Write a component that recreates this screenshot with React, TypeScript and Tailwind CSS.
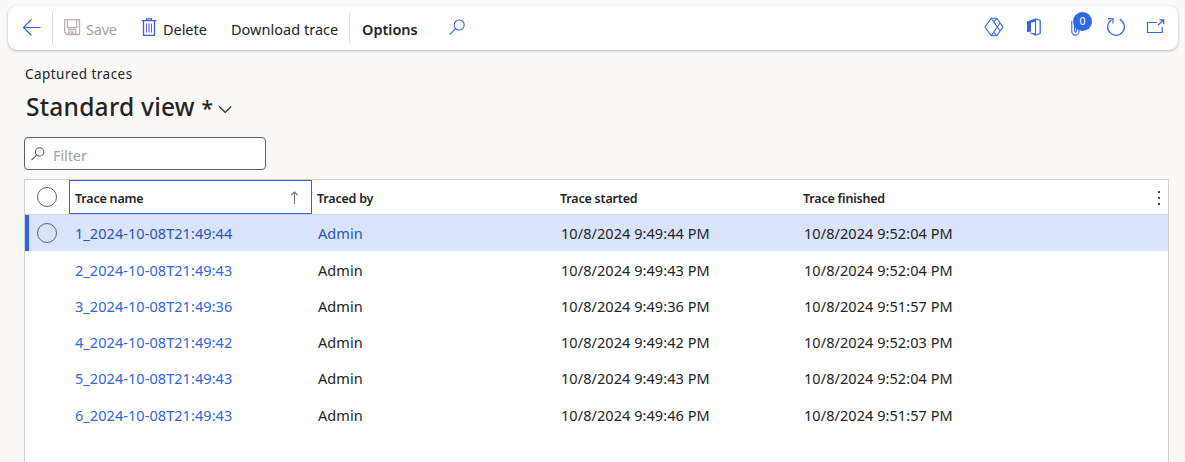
import React from "react";

const rows = [
  { name: "1_2024-10-08T21:49:44", start: "10/8/2024 9:49:44 PM", end: "10/8/2024 9:52:04 PM", h: "h-[36px]" },
  { name: "2_2024-10-08T21:49:43", start: "10/8/2024 9:49:43 PM", end: "10/8/2024 9:52:04 PM", h: "h-[37px]" },
  { name: "3_2024-10-08T21:49:36", start: "10/8/2024 9:49:36 PM", end: "10/8/2024 9:51:57 PM", h: "h-[36px]" },
  { name: "4_2024-10-08T21:49:42", start: "10/8/2024 9:49:42 PM", end: "10/8/2024 9:52:03 PM", h: "h-[36px]" },
  { name: "5_2024-10-08T21:49:43", start: "10/8/2024 9:49:43 PM", end: "10/8/2024 9:52:04 PM", h: "h-[36px]" },
  { name: "6_2024-10-08T21:49:43", start: "10/8/2024 9:49:46 PM", end: "10/8/2024 9:51:57 PM", h: "h-[37px]" },
];

function Icon({ w, h, className, children }: { w: number; h: number; className?: string; children: React.ReactNode }) {
  return (
    <svg width={w} height={h} viewBox={`0 0 ${w} ${h}`} fill="none" stroke="currentColor" strokeWidth="1.1" className={`shrink-0 ${className ?? ""}`}>
      {children}
    </svg>
  );
}

function Toolbar() {
  return (
    <header className="ml-2 mr-[7px] mt-1.5 flex h-11 shrink-0 rounded-[9px] bg-white text-[14.5px] leading-5 text-[#242424] shadow-[0_1px_3px_rgba(0,0,0,0.28)]">
      <button className="flex h-11 w-11 shrink-0 pl-[14px] pt-3 text-[#3566e3]" aria-label="Back">
        <Icon w={20} h={18}>
          <path d="M18.5 9.5H1.5M9.5 1.5l-8 8 8 8" strokeWidth="1.2" />
        </Icon>
      </button>
      <div className="mt-1.5 h-8 w-px shrink-0 bg-[#dcdcdc]" />
      <button className="flex w-[79px] shrink-0 pl-[11px] text-[#a3a19f]">
        <Icon w={17} h={17} className="mt-[13px] text-[#b9b1ae]">
          <path d="M.7.7h14.8v14.8H3L.7 13.2zM3.5.7v7.8h9.2V.7M4.7 15.5v-5h7v5M6.9 15.5v-2.7h2v2.7" strokeWidth="1.3" />
        </Icon>
        <span className="ml-[5px] mt-[13px] tracking-[-0.2px]">Save</span>
      </button>
      <button className="flex w-[91px] shrink-0 pl-[9px]">
        <Icon w={16} h={19} className="mt-[12px] text-[#3a62e3]">
          <path d="M.5 2.6h14.8M5.5 2.5V.8h4.8v1.7M2.5 2.8v14.5h11V2.8" strokeWidth="1.3" />
          <path d="M5.5 5.5v9M8 5.5v9M10.5 5.5v9" stroke="#6f5fe0" strokeWidth="1.1" />
        </Icon>
        <span className="ml-[6px] mt-[13px] tracking-[-0.05px]">Delete</span>
      </button>
      <button className="flex w-[126px] shrink-0 whitespace-nowrap pl-2 pt-[13px] tracking-[0.02px]">Download trace</button>
      <div className="mt-1.5 h-8 w-px shrink-0 bg-[#dcdcdc]" />
      <button className="flex w-[99px] shrink-0 pl-3 pt-[13px] font-semibold tracking-[-0.02px]">Options</button>
      <Icon w={17} h={17} className="mt-[13px] text-[#3566e3]">
        <circle cx="10.2" cy="6" r="5" />
        <path d="M6.7 9.6.5 15.7" />
      </Icon>
      <div className="ml-auto flex text-[#3566e3]">
        <Icon w={20} h={20} className="mr-[22px] mt-[11px]">
          <path d="M7.3 1.3h5.4L19 10l-6.3 8.7H7.3L1 10z" strokeWidth="1.1" />
          <path d="M7.3 1.3 13.2 10l-5.9 8.7M12.7 1.3 9.6 5M12.7 18.7 9.6 15M13.2 10l3-4M13.2 10l3 4" strokeWidth="1.1" />
        </Icon>
        <Icon w={16} h={18} className="mr-[26px] mt-[12px]">
          <path d="M9.5 1 14.2 2.5v13L9.5 17" strokeWidth="1.3" />
          <path d="M9.8.3v3.2L5 4.8v8.7L1 14.3V3.6zM2.7 14.5l7.1.8v2.4z" fill="currentColor" stroke="none" />
          <path d="M9.5.7v16.6" />
        </Icon>
        <div className="relative mr-[9px] w-[29px] shrink-0">
          <Icon w={12} h={20} className="ml-[3px] mt-[11px]">
            <path d="M.8 4v10.5a3.6 3.6 0 0 0 7.2 0V4a2.2 2.2 0 0 0-4.4 0v10.3a.9.9 0 0 0 1.8 0V6" />
          </Icon>
          <span className="absolute left-[5px] top-[6px] flex h-[19px] w-[19px] items-center justify-center rounded-full bg-[#2f66e4] text-[10.5px] leading-none text-white">0</span>
        </div>
        <Icon w={20} h={20} className="mr-[20px] mt-[11px]">
          <path d="M13.8 2.4A8.4 8.4 0 1 1 5.4 2.9M2 1.6h5v4.8" strokeWidth="1.2" />
        </Icon>
        <Icon w={19} h={17} className="mr-[13px] mt-[12px]">
          <path d="M11 4.5H1.5v10h14.7V9M12 7.2 17.5 2M13.5 1.8h4.2V6" strokeWidth="1.2" />
        </Icon>
      </div>
    </header>
  );
}

export default function App() {
  return (
    <div className="flex h-[462px] w-[1185px] flex-col overflow-hidden bg-[#faf9f8] font-['Noto_Sans','Open_Sans',sans-serif] text-[#242424]">
      <Toolbar />
      <div className="ml-[25px] mt-[15px] h-[18px] text-[13.5px] leading-[18px] tracking-[0.46px]">Captured traces</div>
      <div className="ml-[26px] mt-[6px] flex h-9 text-[24.5px] font-medium leading-9">
        <h1 className="whitespace-nowrap tracking-[0.24px]">Standard view <span className="text-[21px]">*</span></h1>
        <Icon w={15} h={10} className="ml-[5px] mt-[16px]">
          <path d="m1.2 1.5 6 6 6-6" strokeWidth="1.2" />
        </Icon>
      </div>
      <div className="ml-6 mt-[12px] flex h-[33px] w-[242px] shrink-0 rounded-[4px] border border-[#616161] bg-white text-[14.5px] text-[#a3a19f]">
        <Icon w={15} h={15} className="ml-1.5 mt-[9px] text-[#605e5c]">
          <circle cx="8.7" cy="5" r="4.2" />
          <path d="M5.6 8.1.5 13.2" />
        </Icon>
        <span className="ml-[7px] mt-[7px] leading-5 tracking-[-0.1px]">Filter</span>
      </div>
      <div className="ml-6 mt-[9px] h-[300px] w-[1145px] shrink-0 border border-[#d1d1d1] bg-white">
        <div className="flex h-[35px] border-b border-[#d1d1d1] text-[12.5px] font-semibold leading-[18px] tracking-[-0.2px]">
          <div className="flex w-11 justify-center pt-[7px]">
            <div className="h-5 w-5 rounded-full border border-[#616161]" />
          </div>
          <div className="flex h-[34px] w-[243px] justify-between border border-[#2f66e4] pl-[5px] pt-[9px]">
            <span>Trace name</span>
            <Icon w={9} h={14} className="mr-[12px] mt-px text-[#77706e]">
              <path d="M4.5 13V1M1.2 4.2 4.5 1l3.3 3.2" />
            </Icon>
          </div>
          <div className="w-[243px] pl-[5px] pt-[10px]">Traced by</div>
          <div className="w-[243px] pl-[5px] pt-[10px]">Trace started</div>
          <div className="w-[243px] pl-[5px] pt-[10px]">Trace finished</div>
          <div className="ml-auto mr-2 mt-[10px] flex h-[16px] flex-col justify-between py-[1px]">
            <i className="h-[2px] w-[2px] bg-[#424242]" />
            <i className="h-[2px] w-[2px] bg-[#424242]" />
            <i className="h-[2px] w-[2px] bg-[#424242]" />
          </div>
        </div>
        {rows.map((r, i) => (
          <div key={r.name} className={`flex items-end text-[14.5px] leading-[36px] tracking-[0.06px] ${r.h} ${i === 0 ? "bg-[#dae3fc]" : ""}`}>
            <div className={`flex h-full w-11 items-center border-l-4 pl-2 ${i === 0 ? "border-[#2f66e4]" : "border-transparent"}`}>
              {i === 0 && <div className="h-5 w-5 rounded-full border border-[#616161]" />}
            </div>
            <div className={`h-9 w-[243px] pl-[6px] ${i === 0 ? "text-[#2c53b8]" : "text-[#2f66e4]"}`}>{r.name}</div>
            <div className={`h-9 w-[243px] pl-[6px] ${i === 0 ? "text-[#2c53b8]" : ""}`}>Admin</div>
            <div className="h-9 w-[243px] pl-[6px]">{r.start}</div>
            <div className="h-9 w-[243px] pl-[6px]">{r.end}</div>
          </div>
        ))}
      </div>
    </div>
  );
}
